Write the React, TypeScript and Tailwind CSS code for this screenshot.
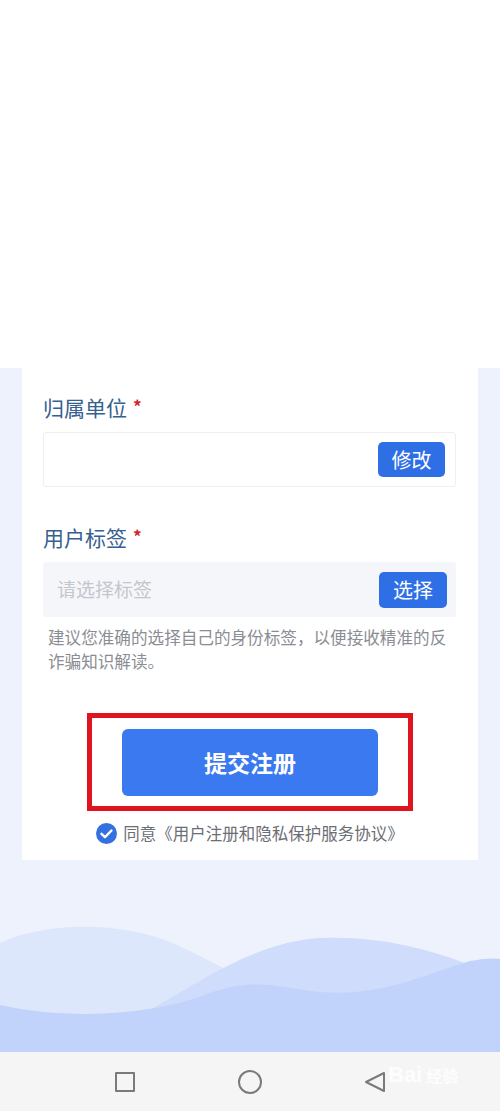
import React from "react";

const font = { fontFamily: '"Noto Sans CJK SC", "Noto Sans", sans-serif' };

function Waves() {
  return (
    <svg width="500" height="192" viewBox="0 860 500 192" className="block">
      <rect x="0" y="860" width="500" height="192" fill="#eef2fc" />
      <path d="M0,943 C40,924 110,920 165,940 C210,958 245,982 285,1002 L285,1052 L0,1052 Z" fill="#dde7fb" />
      <path d="M150,1010 C200,982 255,942 320,938 C385,935 445,952 500,978 L500,1052 L150,1052 Z" fill="#cfdcfb" />
      <path d="M0,1005 C70,1020 150,1016 210,993 C255,977 280,988 320,992 C385,997 430,972 470,961 C485,958 495,958 500,959 L500,1052 L0,1052 Z" fill="#c2d3fb" />
    </svg>
  );
}

export default function App() {
  return (
    <div className="w-[500px] h-[1111px] flex flex-col bg-white overflow-hidden" style={font}>
      <div className="h-[368px] bg-white shrink-0" />
      <div className="flex flex-col bg-[#eef2fc] shrink-0">
        <div className="mx-[22px] h-[492px] bg-white pt-[26px] px-[21px]">
          <div className="flex items-start text-[21px] leading-[26px] text-[#37608f]">
            <span>归属单位</span>
            <span className="text-[#d0242b] text-[17px] leading-[18px] ml-[6px] mt-[3px] font-bold">*</span>
          </div>
          <div className="mt-[12px] h-[55px] w-[413px] border border-[#eeeff2] rounded-[3px] bg-white flex items-center justify-end pr-[10px]">
            <div className="w-[67px] h-[35px] rounded-[5px] bg-[#2f6fe6] text-white text-[20px] flex items-center justify-center">修改</div>
          </div>
          <div className="mt-[37px] flex items-start text-[21px] leading-[26px] text-[#37608f]">
            <span>用户标签</span>
            <span className="text-[#d0242b] text-[17px] leading-[18px] ml-[6px] mt-[3px] font-bold">*</span>
          </div>
          <div className="mt-[12px] h-[55px] w-[413px] rounded-[3px] bg-[#f5f6fa] flex items-center justify-between pl-[14px] pr-[9px]">
            <span className="text-[19px] text-[#c3c6cd]">请选择标签</span>
            <div className="w-[68px] h-[36px] rounded-[5px] bg-[#2f6fe6] text-white text-[20px] flex items-center justify-center">选择</div>
          </div>
          <p className="mt-[8px] ml-[5px] w-[404px] text-[16.6px] leading-[24px] text-[#8a8d93]">
            建议您准确的选择自己的身份标签，以便接收精准的反诈骗知识解读。
          </p>
          <div className="mt-[40px] mx-auto w-[326px] h-[98px] border-[5px] border-[#e0141e] flex items-center justify-center">
            <div className="w-[256px] h-[67px] rounded-[6px] bg-[#3a79ef] text-white text-[23px] font-bold flex items-center justify-center">
              提交注册
            </div>
          </div>
          <div className="mt-[11px] flex items-center justify-center gap-[6px]">
            <svg width="21" height="21" viewBox="0 0 21 21">
              <circle cx="10.5" cy="10.5" r="10.5" fill="#3470df" />
              <path d="M5.5 10.8 L9 14.2 L15.5 7.5" stroke="white" strokeWidth="2.4" fill="none" strokeLinecap="round" strokeLinejoin="round" />
            </svg>
            <span className="text-[16.5px] leading-[22px] text-[#6b6e74]">同意《用户注册和隐私保护服务协议》</span>
          </div>
        </div>
        <Waves />
      </div>
      <div className="relative flex-1 bg-[#f5f5f6] flex items-center">
        <div className="w-[250px] flex justify-center">
          <div className="w-[20px] h-[20px] border-[2px] border-[#7a7a7a] rounded-[1px]" />
        </div>
        <div className="w-0 flex justify-center">
          <div className="w-[24px] h-[24px] shrink-0 border-[2px] border-[#7a7a7a] rounded-full" />
        </div>
        <div className="flex-1 flex justify-center">
          <svg width="24" height="24" viewBox="0 0 24 24">
            <path d="M21 3 L3 12 L21 21 Z" fill="none" stroke="#7a7a7a" strokeWidth="2" strokeLinejoin="round" />
          </svg>
        </div>
        <div className="absolute left-[388px] top-[8px] text-white/80 text-[22px] font-bold leading-[30px] flex items-center gap-[4px]">
          <span style={{ fontFamily: '"Liberation Sans", sans-serif' }}>Bai</span>
          <span className="text-[16px]">经验</span>
        </div>
      </div>
    </div>
  );
}
